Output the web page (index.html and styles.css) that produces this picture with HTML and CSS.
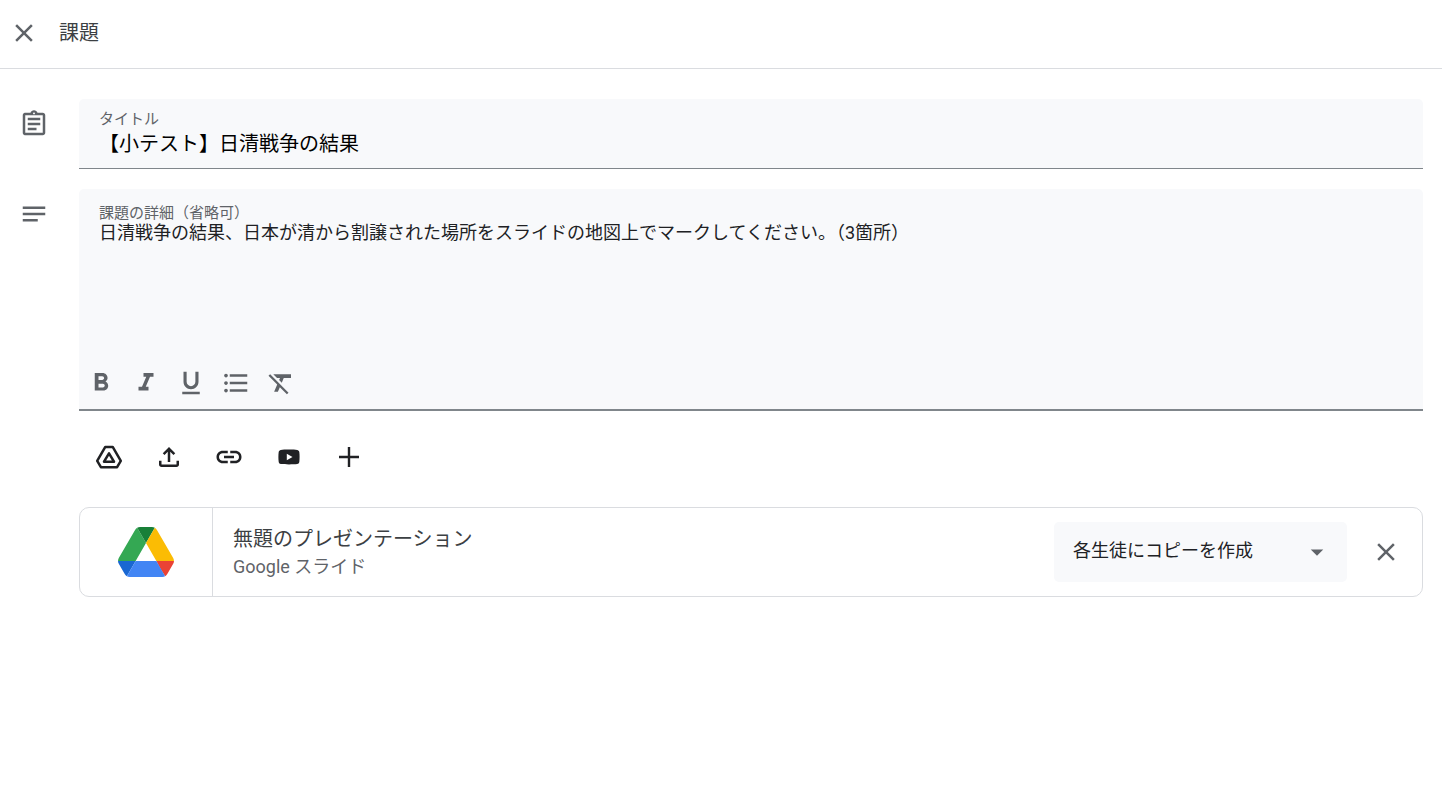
FILE: index.html
```html
<!DOCTYPE html>
<html lang="ja">
<head>
<meta charset="utf-8">
<meta name="viewport" content="width=device-width, initial-scale=1">
<title>課題</title>
<link rel="stylesheet" href="styles.css">
</head>
<body>
<header class="topbar">
  <button class="icon-button" type="button" aria-label="閉じる">
    <svg class="icon" viewBox="0 0 24 24"><path d="M19 6.41 17.59 5 12 10.59 6.41 5 5 6.41 10.59 12 5 17.59 6.41 19 12 13.41 17.59 19 19 17.59 13.41 12z"/></svg>
  </button>
  <h1 class="topbar-title">課題</h1>
</header>
<main class="form">
  <div class="row">
    <svg class="icon row-icon" viewBox="0 0 24 24" aria-hidden="true"><path d="M7 15h7v2H7zm0-4h10v2H7zm0-4h10v2H7zm12-4h-4.180C14.400 1.840 13.300 1 12 1s-2.400.84-2.820 2H5c-.14 0-.27.01-.4.04-.39.08-.74.28-1.010.55-.18.18-.33.4-.43.64-.1.23-.16.49-.16.77v14c0 .27.06.54.16.78s.25.45.43.64c.27.27.62.47 1.010.55.13.02.26.03.4.03h14c1.100 0 2-.9 2-2V5c0-1.100-.9-2-2-2zm-7-.25c.41 0 .75.34.75.75s-.34.75-.75.75-.75-.34-.75-.75.34-.75.75-.75zM19 19H5V5h14v14z"/></svg>
    <div class="field field-title">
      <label class="field-label" for="title">タイトル</label>
      <input class="title-input" id="title" type="text" value="【小テスト】日清戦争の結果">
    </div>
  </div>
  <div class="row">
    <svg class="icon row-icon" viewBox="0 0 24 24" aria-hidden="true"><path d="M3 18h12v-2H3v2zM3 6v2h18V6H3zm0 7h18v-2H3v2z"/></svg>
    <div class="field field-details">
      <label class="field-label" for="details">課題の詳細（省略可）</label>
      <textarea class="details-input" id="details">日清戦争の結果、日本が清から割譲された場所をスライドの地図上でマークしてください。（3箇所）</textarea>
      <div class="format-bar">
        <button class="icon-button" type="button" aria-label="太字"><svg class="icon" viewBox="0 0 24 24"><path d="M15.600 10.790c.97-.67 1.650-1.770 1.650-2.790 0-2.260-1.750-4-4-4H7v14h7.040c2.090 0 3.710-1.700 3.710-3.790 0-1.520-.86-2.820-2.150-3.420zM10 6.500h3c.83 0 1.500.67 1.500 1.500s-.67 1.500-1.500 1.500h-3v-3zm3.500 9H10v-3h3.500c.83 0 1.500.67 1.500 1.500s-.67 1.500-1.500 1.500z"/></svg></button>
        <button class="icon-button" type="button" aria-label="斜体"><svg class="icon" viewBox="0 0 24 24"><path d="M10 4v3h2.210l-3.420 8H6v3h8v-3h-2.210l3.420-8H18V4z"/></svg></button>
        <button class="icon-button" type="button" aria-label="下線"><svg class="icon" viewBox="0 0 24 24"><path d="M12 17c3.310 0 6-2.690 6-6V3h-2.500v8c0 1.930-1.570 3.500-3.500 3.500S8.500 12.930 8.500 11V3H6v8c0 3.310 2.690 6 6 6zm-7 2v2h14v-2H5z"/></svg></button>
        <button class="icon-button" type="button" aria-label="箇条書き"><svg class="icon" viewBox="0 0 24 24"><path d="M4 10.500c-.83 0-1.500.67-1.500 1.500s.67 1.500 1.500 1.500 1.500-.67 1.500-1.500-.67-1.500-1.500-1.500zm0-6c-.83 0-1.500.67-1.500 1.500S3.170 7.500 4 7.500 5.500 6.830 5.500 6 4.830 4.500 4 4.500zm0 12c-.83 0-1.500.68-1.500 1.500s.68 1.500 1.500 1.500 1.500-.68 1.500-1.500-.67-1.500-1.500-1.500zM7 19h14v-2H7v2zm0-6h14v-2H7v2zm0-8v2h14V5H7z"/></svg></button>
        <button class="icon-button" type="button" aria-label="書式をクリア"><svg class="icon" viewBox="0 0 24 24"><path d="M3.270 5 2 6.270l6.970 6.970L6.500 19h3l1.570-3.660L16.730 21 18 19.730 3.550 5.270 3.270 5zM6 5v.18L8.820 8h2.400l-.72 1.680 2.100 2.100L14.210 8H20V5H6z"/></svg></button>
      </div>
    </div>
  </div>
  <div class="attachments">
    <div class="attach-bar">
      <button class="attach-button" type="button" aria-label="ドライブ"><svg class="icon" viewBox="0 0 30 30"><g fill="none" stroke="currentColor" stroke-width="2.500" stroke-linejoin="round"><path d="M11.300 4.900h7.400l8.100 14-3.700 6.300H6.900l-3.700-6.300z"/><path stroke-linejoin="round" d="M15 11.400 10 19.700h10z"/></g></svg></button>
      <button class="attach-button" type="button" aria-label="アップロード"><svg class="icon" viewBox="0 0 24 24"><path d="M11 16V7.850l-2.600 2.600L7 9l5-5 5 5-1.400 1.450-2.600-2.600V16h-2ZM6 20c-.55 0-1.020-.2-1.410-.59C4.200 19.020 4 18.550 4 18v-3h2v3h12v-3h2v3c0 .55-.2 1.020-.59 1.410-.39.39-.86.59-1.410.59H6Z"/></svg></button>
      <button class="attach-button" type="button" aria-label="リンク"><svg class="icon" viewBox="0 0 24 24"><path d="M11 17H7c-1.380 0-2.560-.49-3.540-1.460C2.490 14.560 2 13.380 2 12s.49-2.560 1.460-3.540C4.440 7.490 5.620 7 7 7h4v2H7c-.83 0-1.540.29-2.130.88C4.290 10.460 4 11.170 4 12s.29 1.540.87 2.130C5.460 14.710 6.170 15 7 15h4v2Zm-3-4v-2h8v2H8Zm5 4v-2h4c.83 0 1.540-.29 2.130-.87.58-.59.87-1.300.87-2.130s-.29-1.540-.87-2.120C18.540 9.290 17.830 9 17 9h-4V7h4c1.380 0 2.560.49 3.540 1.460C21.510 9.440 22 10.620 22 12s-.49 2.560-1.460 3.540C19.560 16.510 18.380 17 17 17h-4Z"/></svg></button>
      <button class="attach-button" type="button" aria-label="YouTube"><svg class="icon" viewBox="0 0 30 30"><path fill-rule="evenodd" d="M15 7.600c3.500 0 6.500.1 8.200.4 1.100.2 1.900 1 2.100 2.100.4 2.800.4 7 0 9.800-.2 1.100-1 1.900-2.100 2.100-3.800.5-12.600.5-16.400 0-1.100-.2-1.900-1-2.100-2.100-.4-2.800-.4-7 0-9.800C4.900 9 5.700 8.200 6.800 8c1.700-.3 4.700-.4 8.200-.4ZM12.800 11.700v6.600l5.700-3.300z"/></svg></button>
      <button class="attach-button" type="button" aria-label="作成"><svg class="icon" viewBox="0 0 30 30"><path d="M13.800 5h2.400v8.800H25v2.400h-8.800V25h-2.400v-8.800H5v-2.400h8.800z"/></svg></button>
    </div>
    <article class="card">
      <div class="card-thumb">
        <svg class="drive-logo" viewBox="0 0 87.300 78" aria-hidden="true">
          <path d="m6.600 66.850 3.850 6.650c.8 1.400 1.950 2.500 3.300 3.300l13.750-23.800H0c0 1.550.4 3.100 1.200 4.500z" fill="#1967d2"/>
          <path d="M43.650 25 29.900 1.200c-1.350.8-2.500 1.900-3.300 3.300l-25.400 44A9.060 9.060 0 0 0 0 53h27.500z" fill="#34a853"/>
          <path d="M73.550 76.800c1.350-.8 2.500-1.900 3.300-3.300l1.600-2.750 7.650-13.250c.8-1.400 1.200-2.950 1.200-4.500H59.800l5.850 11.500z" fill="#ea4335"/>
          <path d="M43.650 25 57.400 1.200C56.050.4 54.500 0 52.900 0H34.400c-1.600 0-3.150.45-4.500 1.200z" fill="#188038"/>
          <path d="M59.800 53H27.500L13.750 76.800c1.350.8 2.900 1.200 4.500 1.200h50.800c1.600 0 3.150-.45 4.500-1.200z" fill="#4285f4"/>
          <path d="m73.400 26.500-12.700-22c-.8-1.400-1.950-2.500-3.300-3.300L43.650 25 59.800 53h27.450c0-1.550-.4-3.100-1.200-4.500z" fill="#fbbc04"/>
        </svg>
      </div>
      <div class="card-text">
        <h2 class="card-title">無題のプレゼンテーション</h2>
        <p class="card-type">Google スライド</p>
      </div>
      <div class="share">
        <select class="share-select" aria-label="ファイルの共有方法">
          <option>各生徒にコピーを作成</option>
        </select>
        <svg class="icon share-arrow" viewBox="0 0 24 24" aria-hidden="true"><path d="m7 10 5 5 5-5z"/></svg>
      </div>
      <button class="icon-button card-remove" type="button" aria-label="添付ファイルを削除">
        <svg class="icon" viewBox="0 0 24 24"><path d="M19 6.410 17.590 5 12 10.590 6.410 5 5 6.410 10.590 12 5 17.590 6.410 19 12 13.410 17.590 19 19 17.590 13.410 12z"/></svg>
      </button>
    </article>
  </div>
</main>
</body>
</html>
```

FILE: styles.css
```css
* {
  box-sizing: border-box;
}

body {
  margin: 0;
  background: #fff;
  color: #202124;
  font-family: Roboto, "Noto Sans CJK JP", sans-serif;
}

button,
input,
select,
textarea {
  margin: 0;
  padding: 0;
  border: 0;
  background: none;
  color: inherit;
  font: inherit;
}

button,
select {
  cursor: pointer;
}

.icon {
  display: block;
  flex: none;
  width: 30px;
  height: 30px;
  fill: currentColor;
}

.icon-button {
  flex: none;
  color: #5f6368;
}

.topbar {
  display: flex;
  align-items: center;
  gap: 20px;
  padding: 18px 9px 20px;
  border-bottom: 1px solid #dadce0;
}

.topbar-title {
  margin: 0;
  color: #3c4043;
  font-size: 20px;
  font-weight: 400;
  line-height: 30px;
}

.form {
  display: flex;
  flex-direction: column;
  gap: 20px;
  padding: 30px 19px;
}

.row {
  display: flex;
  gap: 30px;
}

.row-icon {
  margin-top: 10px;
  color: #5f6368;
}

.field {
  display: flex;
  flex: 1;
  flex-direction: column;
  border-radius: 5px 5px 0 0;
  background: #f8f9fb;
}

.field-title {
  padding: 10px 20px 13px;
  border-bottom: 1px solid #80868b;
}

.field-details {
  padding: 14px 20px 11px;
  border-bottom: 2px solid #80868b;
}

.field-label {
  color: #5f6368;
  font-size: 15px;
  line-height: 20px;
}

.title-input {
  width: 100%;
  height: 26px;
  color: #000;
  font-size: 20px;
}

.details-input {
  width: 100%;
  height: 133px;
  font-size: 18px;
  line-height: 20px;
  outline: none;
  resize: none;
}

.format-bar {
  display: flex;
  gap: 15px;
  margin: 12px -13px 0;
}

.attachments {
  display: flex;
  flex-direction: column;
  gap: 20px;
  margin: -4px 0 0 60px;
}

.attach-bar {
  display: flex;
}

.attach-button {
  padding: 15px;
  color: #202124;
}

.card {
  display: flex;
  align-items: center;
  min-height: 90px;
  border: 1px solid #dadce0;
  border-radius: 10px;
}

.card-thumb {
  display: flex;
  align-items: center;
  align-self: stretch;
  justify-content: center;
  width: 133px;
  border-right: 1px solid #dadce0;
}

.drive-logo {
  width: 56px;
  height: 50px;
}

.card-text {
  flex: 1;
  padding: 0 20px 2px;
}

.card-title {
  margin: 0;
  color: #3c4043;
  font-size: 20px;
  font-weight: 400;
  line-height: 30px;
}

.card-type {
  margin: 0;
  color: #5f6368;
  font-size: 18px;
  line-height: 25px;
}

.share {
  position: relative;
  width: 293px;
}

.share-select {
  display: block;
  width: 100%;
  height: 60px;
  padding: 0 50px 3px 19px;
  border-radius: 5px;
  background: #f8f9fb;
  appearance: none;
  font-size: 18px;
}

.share-arrow {
  position: absolute;
  top: 15px;
  right: 15px;
  color: #5f6368;
  pointer-events: none;
}

.card-remove {
  margin: 0 21px 0 24px;
}
```
